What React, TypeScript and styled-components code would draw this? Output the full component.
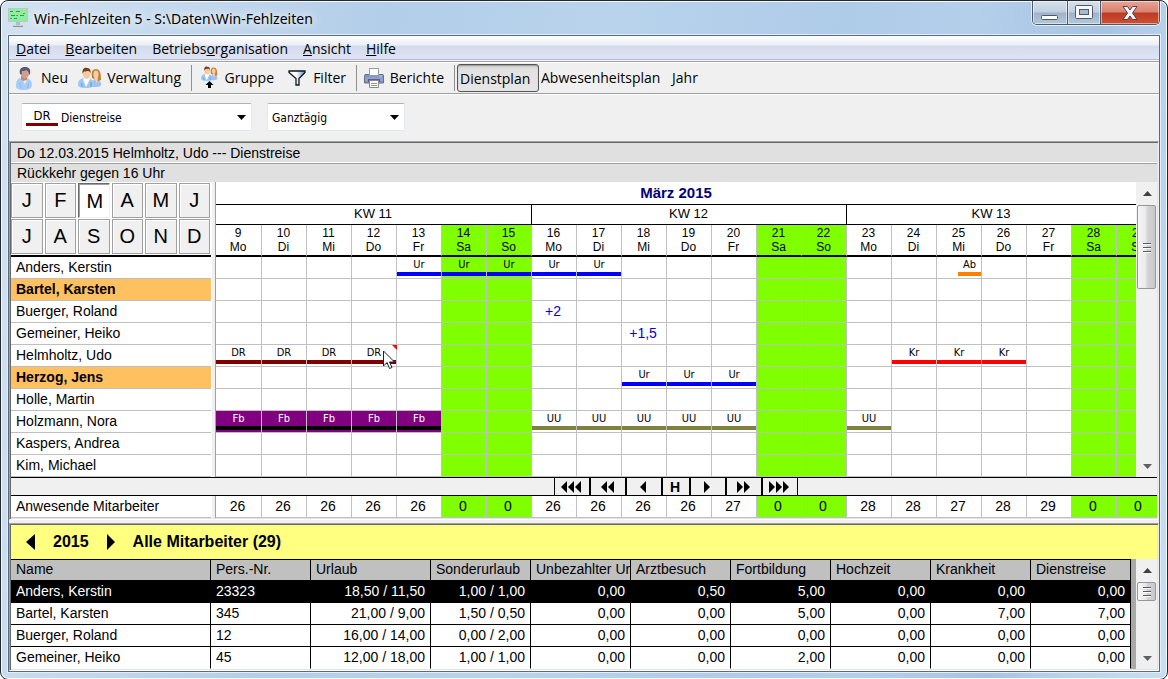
import React from 'react';
import styled, { createGlobalStyle, css } from 'styled-components';

const UI = '"Open Sans", "Noto Sans", sans-serif';
const ARIAL = '"Liberation Sans", Arial, sans-serif';
const TAHOMA = '"DejaVu Sans Condensed", "Noto Sans", sans-serif';
const LINE = '#c0c0c0';
const GREEN = '#80ff00';

const Global = createGlobalStyle`
  *, *::before, *::after { box-sizing: border-box; }
  body { margin: 0; background: #fff; }
  button { font: inherit; color: inherit; padding: 0; margin: 0; border: 0; background: none; }
  h1, h2, p, ul { margin: 0; padding: 0; font-size: inherit; font-weight: inherit; }
`;

const Window = styled.div`
  display: flex;
  flex-direction: column;
  min-height: 100vh;
  padding: 0 7px 7px;
  border: 1px solid #23272e;
  border-radius: 8px;
  box-shadow: inset 0 0 0 1px #f4f9fd;
  background: linear-gradient(100deg, #d3e2f1 0, #c6daee 12%, #b3cee9 30%, #b9d3ec 48%, #aecbe8 66%, #b4cfea 76%, #a6c4e2 86%, #b9d3ec 92%, #c9def0 100%);
  font-family: ${ARIAL};
  font-size: 14px;
  color: #000;
  overflow: hidden;
`;

const TitleBar = styled.header`
  display: flex;
  align-items: flex-start;
  height: 34px;
`;

const Title = styled.h1`
  display: flex;
  flex: 1;
  align-items: center;
  gap: 6px;
  height: 34px;
  font-family: "Noto Sans", "Open Sans", sans-serif;
  font-size: 14px;
  white-space: nowrap;
  text-shadow: 0 0 8px #fff, 0 0 12px #fff;
`;

const Captions = styled.div`
  display: flex;
  border: 1px solid #4d5a6b;
  border-top: 0;
  border-radius: 0 0 5px 5px;
  box-shadow: 0 0 0 1px #e6f0f8;
  overflow: hidden;
`;

const CaptionButton = styled.button<{ $w: number; $close?: boolean }>`
  display: flex;
  align-items: center;
  justify-content: center;
  width: ${p => p.$w}px;
  height: 23px;
  border-right: 1px solid #4d5a6b;
  box-shadow: inset 0 0 0 1px rgba(255, 255, 255, 0.5);
  background: ${p => p.$close
    ? 'linear-gradient(#e9a393, #d98272 48%, #bd3b23 52%, #cc5137)'
    : 'linear-gradient(#d5e1ed, #c0cfdf 48%, #9fb2c8 52%, #b4c8dc)'};
  &:last-child { border-right: 0; }
`;

const Client = styled.main`
  display: flex;
  flex: 1;
  flex-direction: column;
  border: 1px solid #5c6a7b;
  box-shadow: 0 0 0 1px #e2eef8;
  background: #f0f0f0;
  min-width: 0;
`;

const MenuBar = styled.nav`
  display: flex;
  align-items: center;
  gap: 15px;
  height: 25px;
  padding: 0 7px;
  border-bottom: 1px solid #f5f5f5;
  box-shadow: inset 0 -1px #b6bccc;
  background: linear-gradient(#fff, #e9eef7 9px, #d4dbed 10px, #dfe5f5);
  font-family: ${UI};
  font-size: 14px;
`;

const ToolBar = styled.div`
  display: flex;
  align-items: center;
  height: 32px;
  padding: 0 6px;
  border-top: 1px solid #a0a0a0;
  box-shadow: inset 0 1px #fff;
  font-family: ${UI};
  font-size: 14px;
`;

const Tool = styled.button<{ $w: number; $pressed?: boolean }>`
  display: flex;
  align-items: center;
  justify-content: space-between;
  width: ${p => p.$w}px;
  height: 28px;
  white-space: nowrap;
  ${p => p.$pressed && css`
    justify-content: flex-start;
    padding: 2px 0 0 2px;
    border: 1px solid #555;
    border-radius: 3px;
    background: linear-gradient(#cfcfcf, #e2e2e2 5px, #e6e6e6);
    box-shadow: inset 0 1px 1px #999;
  `}
`;

const ToolGap = styled.span<{ $w: number }>`
  width: ${p => p.$w}px;
`;

const Divider = styled.span`
  width: 1px;
  height: 26px;
  background: #909090;
`;

const Choices = styled.div`
  display: flex;
  gap: 15px;
  height: 48px;
  padding: 9px 12px;
  border-top: 1px solid #a0a0a0;
  box-shadow: inset 0 1px #fff;
`;

const Combo = styled.label<{ $w: number }>`
  display: flex;
  position: relative;
  width: ${p => p.$w}px;
  height: 28px;
  font-family: ${TAHOMA};
  font-size: 12px;
  svg { position: absolute; right: 6px; top: 12px; pointer-events: none; }
`;

const ComboBox = styled.select<{ $tagged?: boolean }>`
  appearance: none;
  width: 100%;
  padding: 2px 20px 0 ${p => (p.$tagged ? 39 : 4)}px;
  border: 1px solid #e2e8f0;
  border-top-color: #b0b4ba;
  border-radius: 2px;
  background: #fff;
  color: #000;
  font: inherit;
`;

const ComboTag = styled.span`
  position: absolute;
  left: 5px;
  top: 5px;
  width: 32px;
  height: 18px;
  border-bottom: 3px solid #800000;
  font-size: 13px;
  line-height: 15px;
  text-align: center;
`;

const Sunken = styled.section<{ $grow?: boolean }>`
  display: flex;
  flex-direction: column;
  flex: ${p => (p.$grow ? '1' : 'none')};
  border: 1px solid;
  border-color: #a0a0a0 #f0f0f0 #fff #a0a0a0;
  box-shadow: inset 1px 1px #696969, inset -1px -1px #e3e3e3;
  padding: 1px;
  & + & { margin-top: 3px; }
`;

const Info = styled.p`
  height: 20px;
  padding: 0 6px;
  border-bottom: 1px solid #fff;
  background: #e0e0e0;
  line-height: 20px;
  & + & { height: 19px; border-top: 1px solid #a0a0a0; border-bottom: 0; line-height: 18px; }
`;

const Plan = styled.div`
  display: flex;
  background: #fff;
`;

const Left = styled.div`
  flex: none;
  width: 200px;
`;

const Gutter = styled.div`
  flex: none;
  width: 5px;
  border-left: 1px solid #fff;
  border-right: 1px solid #a0a0a0;
  background: #f0f0f0;
`;

const Months = styled.div`
  display: grid;
  grid-template-columns: repeat(6, 1fr);
  grid-auto-rows: 35px;
  gap: 1px;
  height: 75px;
  padding-top: 1px;
  border-bottom: 2px solid #000;
`;

const Month = styled.button<{ $on?: boolean }>`
  margin: 0 1px 0 0;
  border: 1px solid #a0a0a0;
  box-shadow: inset 1px 1px #fff;
  background: #f0f0f0;
  font-size: 20px;
  ${p => p.$on && css`
    border-color: #696969 #f0f0f0 #f0f0f0 #696969;
    box-shadow: inset 1px 1px #a0a0a0;
    background: #fff;
    padding: 2px 0 0 2px;
  `}
`;

const Names = styled.ul`
  list-style: none;
`;

const Person = styled.li<{ $marked?: boolean }>`
  height: 22px;
  padding: 0 5px;
  border-bottom: 1px solid ${LINE};
  line-height: 21px;
  white-space: nowrap;
  background: ${p => (p.$marked ? '#ffc060' : '#fff')};
  font-weight: ${p => (p.$marked ? 'bold' : 'normal')};
`;

const Viewport = styled.div`
  flex: 1;
  min-width: 0;
  overflow: hidden;
`;

const MonthTitle = styled.h2`
  height: 23px;
  border-bottom: 1px solid #000;
  color: #000080;
  font-size: 15px;
  font-weight: bold;
  line-height: 22px;
  text-align: center;
`;

const Grid = styled.table`
  width: 100%;
  min-width: 946px;
  table-layout: fixed;
  border-spacing: 0;
  th, td { padding: 0; font-weight: normal; text-align: center; vertical-align: top; }
`;

const Week = styled.th<{ $last?: boolean }>`
  height: 20px;
  border-bottom: 1px solid #000;
  border-right: 1px solid #000;
  font-size: 13px;
  line-height: 18px;
  && { padding-right: ${p => (p.$last ? 26 : 1)}px; }
`;

const Day = styled.th<{ $free: boolean }>`
  height: 32px;
  border-right: 1px solid ${LINE};
  border-bottom: 2px solid #000;
  background: ${p => (p.$free ? GREEN : '#fff')};
  font-size: 12px;
  line-height: 14px;
  && { padding: 1px 1px 0 0; }
`;

const Cell = styled.td<{ $free: boolean }>`
  position: relative;
  height: 22px;
  border-right: 1px solid ${LINE};
  border-bottom: 1px solid ${LINE};
  background: ${p => (p.$free ? GREEN : '#fff')};
  line-height: 21px;
`;

const Credit = styled.span`
  display: block;
  height: 21px;
  padding-right: 2px;
  color: #0000e0;
  line-height: 21px;
`;

const Present = styled.span`
  display: block;
  padding-right: 2px;
`;

const Absence = styled.span<{ $bar: string; $fill?: string; $half?: boolean }>`
  display: block;
  height: 21px;
  margin-left: ${p => (p.$half ? '21px' : '0')};
  background: ${p => p.$fill || 'transparent'};
  color: ${p => (p.$fill ? '#fff' : '#000')};
  font-family: ${TAHOMA};
  font-size: 11px;
  line-height: 15px;
  &::after {
    content: '';
    display: block;
    height: 4px;
    background: ${p => p.$bar};
  }
`;

const NoteMark = styled.span`
  position: absolute;
  top: 0;
  right: -1px;
  border-top: 5px solid #f00;
  border-left: 5px solid transparent;
`;

const Pointer = styled.svg`
  position: absolute;
  left: 31px;
  top: 5px;
  z-index: 2;
`;

const Scroll = styled.div`
  display: flex;
  flex: none;
  flex-direction: column;
  width: 21px;
  padding-left: 1px;
  background: #f0f0f0;
`;

const ScrollButton = styled.button<{ $end?: boolean }>`
  display: flex;
  align-items: center;
  justify-content: center;
  height: 22px;
  margin-top: ${p => (p.$end ? 'auto' : '0')};
`;

const Thumb = styled.div<{ $h: number }>`
  display: flex;
  align-items: center;
  justify-content: center;
  height: ${p => p.$h}px;
  margin-right: 1px;
  margin-top: 1px;
  border: 1px solid #979797;
  border-radius: 2px;
  background: linear-gradient(90deg, #f5f5f5, #e9e9eb 45%, #d4d4d6 55%, #c8c8ca);
`;

const NavBar = styled.div`
  display: flex;
  justify-content: center;
  height: 19px;
  padding: 0 21px 0 205px;
  border: solid #000;
  border-width: 1px 0;
`;

const NavButton = styled.button<{ $w: number }>`
  display: flex;
  align-items: center;
  justify-content: center;
  width: ${p => p.$w}px;
  padding-right: 2px;
  border: solid #000;
  border-width: 0 1px;
  font-weight: bold;
`;

const YearBar = styled.div`
  display: flex;
  align-items: center;
  gap: 18px;
  height: 34px;
  padding: 0 15px;
  background: #ffff80;
  font-size: 16px;
  font-weight: bold;
  button { display: flex; }
`;

const Accounts = styled.div`
  display: flex;
  flex: 1;
  background: #a9a9a9;
`;

const AccountPane = styled.div`
  flex: 1;
  min-width: 0;
  margin-right: 5px;
  background: #fff;
  overflow: hidden;
`;

const AccountTable = styled.table`
  width: 100%;
  table-layout: fixed;
  border-spacing: 0;
  th, td {
    height: 22px;
    padding: 0 5px;
    border-right: 1px solid #000;
    border-bottom: 1px solid #000;
    font-weight: normal;
    line-height: 20px;
    text-align: left;
    vertical-align: top;
    white-space: nowrap;
    overflow: hidden;
  }
  th { border-top: 1px solid #000; padding-right: 0; background: #c0c0c0; line-height: 18px; }
  td:nth-child(n + 3) { text-align: right; }
  tbody tr:last-child td { border-bottom-color: #fff; }
`;

const AccountRow = styled.tr<{ $active?: boolean }>`
  background: ${p => (p.$active ? '#000' : '#fff')};
  color: ${p => (p.$active ? '#fff' : '#000')};
`;

const AppIcon = () => (
  <svg width="20" height="20" viewBox="0 0 20 20" aria-hidden="true">
    <rect x="0.5" y="0.5" width="19" height="13" fill="#86f0a4" stroke="#b9c9c4" />
    <path d="M2 3.500h3M8 3.500h4M3 7.500h4M12 7.500h4M6 10.500h3" stroke="#1f9f50" />
    <path d="M13 3.500h4M9 5.500h3M14 10.500h3M3 5.500h2" stroke="#e8d44c" />
    <path d="M2 10.500h2M8 7.500h2M15 5.500h2" stroke="#d8604e" />
    <path d="M8 14h4v3H8z" fill="#b4bcc2" />
    <path d="M5 17h10v2H5z" fill="#8a949b" />
    <path d="M5 17.500h10" stroke="#c9d0d5" />
  </svg>
);

const PersonIcon = () => (
  <svg width="18" height="24" viewBox="0 0 18 24" aria-hidden="true">
    <path d="M1 20c0-4 1-7 4-8l3 2 4-2c3 1 5 3 5 7 0 3-3 5-8 5s-8-1-8-4z" fill="#a8cdf6" />
    <path d="M4 17c1 1 2 3 2 5M14 16c-1 2-1 4-1 6" stroke="#8ab6ea" fill="none" />
    <path d="M6 10h6v4l-3 2-3-3z" fill="#c08a70" />
    <ellipse cx="10" cy="7.500" rx="4" ry="5" fill="#cfa08c" />
    <path d="M5 8C4 3 6 1 10 1c4 0 6 2 5 7l-1 1c0-3-1-4-3-5-1 1-3 1-4 1l-.5 4z" fill="#5c5670" />
    <path d="M8 15l2 3 2-4z" fill="#e8f2fd" />
  </svg>
);

const Couple = () => (
  <>
    <path d="M13 20c0-5 2-8 5-8 4 0 5 3 5 6 0 1-2 2-5 2z" fill="#9cc4f2" />
    <path d="M14 11c-1-6 0-9 4-9s5 4 5 11l-3 1-4-2z" fill="#c08438" />
    <ellipse cx="18" cy="7.500" rx="2.500" ry="4" fill="#f6cda4" />
    <path d="M16 11h4l-1 5z" fill="#f6d2ac" />
    <path d="M0 18c0-4 2-6 5-7h5c4 1 6 3 6 7 0 2-3 3-8 3s-8-1-8-3z" fill="#9cc8f4" />
    <path d="M5 12l3 8 4-8-2-1H6z" fill="#fff" />
    <path d="M3 16c1 1 1 2 1 4M13 15v5" stroke="#5f97d8" fill="none" />
    <ellipse cx="8.500" cy="7" rx="3.500" ry="5" fill="#f4c8a0" />
    <path d="M4.500 7C4 2 6 0 9 1c3 0 4 2 3.500 6C12 4 11 4 9 4 7 5 6 4 5.500 5z" fill="#7a3f17" />
  </>
);

const CoupleIcon = () => (
  <svg width="24" height="21" viewBox="0 0 24 21" aria-hidden="true"><Couple /></svg>
);

const GroupIcon = () => (
  <svg width="17" height="23" viewBox="0 0 17 23" aria-hidden="true">
    <svg width="17" height="15" viewBox="0 0 24 21" preserveAspectRatio="none"><Couple /></svg>
    <path d="M8.500 15l4 4h-8z" />
    <path d="M7 18h3v4H7z" />
  </svg>
);

const FilterIcon = () => (
  <svg width="18" height="16" viewBox="0 0 18 16" aria-hidden="true">
    <defs>
      <linearGradient id="funnel">
        <stop offset=".45" stopColor="#fff" />
        <stop offset="1" stopColor="#4f8fe0" />
      </linearGradient>
    </defs>
    <path d="M1 1h16v1.500l-6 6v6.500H8V8.500l-7-6z" fill="url(#funnel)" stroke="#101418" strokeWidth="1.300" />
  </svg>
);

const PrinterIcon = () => (
  <svg width="20" height="20" viewBox="0 0 20 20" aria-hidden="true">
    <path d="M1 6.500h18l.5 1V15h-19V7.500z" fill="#6d9fb8" stroke="#6a7088" />
    <path d="M1 9h18v4H1z" fill="#9c97d6" />
    <rect x="5.500" y=".5" width="9" height="7" fill="#fff" stroke="#9a9ca6" />
    <path d="M15 7h3v2h-3z" fill="#7fd0b4" />
    <path d="M4 11h12v3H4z" fill="#5c5f7c" />
    <path d="M5.500 12.500h9v7h-9z" fill="#fff" stroke="#8a8a8a" />
    <path d="M7 15.500h6M7 17.500h6" stroke="#999" />
  </svg>
);

const Down = () => (
  <svg width="9" height="5" viewBox="0 0 9 5" aria-hidden="true"><path d="M0 0h9L4.500 5z" /></svg>
);

const Arrows = ({ n, back, w = 6, h = 12, step = 7 }: { n: number; back?: boolean; w?: number; h?: number; step?: number }) => (
  <svg width={w + step * (n - 1)} height={h} aria-hidden="true">
    {Array.from({ length: n }, (_, i) => {
      const x = i * step;
      return <path key={i} d={back ? `M${x + w} 0v${h}L${x} ${h / 2}z` : `M${x} 0v${h}L${x + w} ${h / 2}z`} />;
    })}
  </svg>
);

const ScrollBar = ({ thumb }: { thumb: number }) => (
  <Scroll>
    <ScrollButton aria-label="Nach oben">
      <svg width="9" height="5"><path d="M0 5h9L4.500 0z" fill="#404040" /></svg>
    </ScrollButton>
    <Thumb $h={thumb}>
      <svg width="10" height="11">
        <path d="M1 1.500h8M1 5.500h8M1 9.500h8" stroke="#555b63" />
        <path d="M1 2.500h8M1 6.500h8M1 10.500h8" stroke="#fff" />
      </svg>
    </Thumb>
    <ScrollButton $end aria-label="Nach unten">
      <svg width="9" height="5"><path d="M0 0h9L4.500 5z" fill="#606060" /></svg>
    </ScrollButton>
  </Scroll>
);

const WEEKDAYS = ['Mo', 'Di', 'Mi', 'Do', 'Fr', 'Sa', 'So'];
const DAYS = Array.from({ length: 21 }, (_, i) => ({ n: i + 9, name: WEEKDAYS[i % 7], free: i % 7 > 4 }));
const PRESENT = [26, 26, 26, 26, 26, 0, 0, 26, 26, 26, 26, 27, 0, 0, 28, 28, 27, 28, 29, 0, 0];

const KINDS: Record<string, { bar: string; fill?: string; half?: boolean }> = {
  Ur: { bar: '#0000ff' },
  DR: { bar: '#800000' },
  Fb: { bar: '#000', fill: '#800080' },
  UU: { bar: '#808040' },
  Kr: { bar: '#ff0000' },
  Ab: { bar: '#ff8000', half: true },
};

type Staff = { name: string; marked?: boolean; days?: Record<number, string>; note?: number };

const fill = (kind: string, ...days: number[]) => Object.fromEntries(days.map(d => [d, kind]));

const STAFF: Staff[] = [
  { name: 'Anders, Kerstin', days: { ...fill('Ur', 13, 14, 15, 16, 17), 25: 'Ab' } },
  { name: 'Bartel, Karsten', marked: true },
  { name: 'Buerger, Roland', days: { 16: '+2' } },
  { name: 'Gemeiner, Heiko', days: { 18: '+1,5' } },
  { name: 'Helmholtz, Udo', days: { ...fill('DR', 9, 10, 11, 12), ...fill('Kr', 24, 25, 26) }, note: 12 },
  { name: 'Herzog, Jens', marked: true, days: fill('Ur', 18, 19, 20) },
  { name: 'Holle, Martin' },
  { name: 'Holzmann, Nora', days: { ...fill('Fb', 9, 10, 11, 12, 13), ...fill('UU', 16, 17, 18, 19, 20, 23) } },
  { name: 'Kaspers, Andrea' },
  { name: 'Kim, Michael' },
];

const COLUMNS = ['Name', 'Pers.-Nr.', 'Urlaub', 'Sonderurlaub', 'Unbezahlter Ur', 'Arztbesuch', 'Fortbildung', 'Hochzeit', 'Krankheit', 'Dienstreise'];
const ACCOUNTS = [
  ['Anders, Kerstin', '23323', '18,50 / 11,50', '1,00 / 1,00', '0,00', '0,50', '5,00', '0,00', '0,00', '0,00'],
  ['Bartel, Karsten', '345', '21,00 / 9,00', '1,50 / 0,50', '0,00', '0,00', '5,00', '0,00', '7,00', '7,00'],
  ['Buerger, Roland', '12', '16,00 / 14,00', '0,00 / 2,00', '0,00', '0,00', '0,00', '0,00', '0,00', '0,00'],
  ['Gemeiner, Heiko', '45', '12,00 / 18,00', '1,00 / 1,00', '0,00', '0,00', '2,00', '0,00', '0,00', '0,00'],
];

const DayColumns = () => (
  <colgroup>
    {DAYS.map((d, i) => <col key={d.n} style={{ width: i ? 45 : 46 }} />)}
  </colgroup>
);

const Entry = ({ code }: { code: string }) => {
  const kind = KINDS[code];
  if (!kind) return <Credit>{code}</Credit>;
  return <Absence $bar={kind.bar} $fill={kind.fill} $half={kind.half}>{code}</Absence>;
};

export default function App() {
  return (
    <>
      <Global />
      <Window>
        <TitleBar>
          <Title><AppIcon />Win-Fehlzeiten 5 - S:\Daten\Win-Fehlzeiten</Title>
          <Captions>
            <CaptionButton $w={35} aria-label="Minimieren">
              <svg width="18" height="20"><rect x=".5" y="12.500" width="16" height="4" rx="1" fill="#fff" stroke="#4d5a6b" /></svg>
            </CaptionButton>
            <CaptionButton $w={33} aria-label="Maximieren">
              <svg width="18" height="15">
                <rect x=".5" y=".5" width="17" height="13" rx="1" fill="#f7f7f7" stroke="#4d5a6b" />
                <rect x="4.500" y="4.500" width="9" height="5" fill="#a9bccf" stroke="#4d5a6b" />
              </svg>
            </CaptionButton>
            <CaptionButton $w={58} $close aria-label="Schließen">
              <svg width="16" height="14">
                <path d="M1 .5h4.500L8 4l2.500-3.500H15L10.500 7l4.500 6.500h-4.500L8 10l-2.500 3.500H1L5.500 7z" fill="#f4f4f4" stroke="#55404a" />
              </svg>
            </CaptionButton>
          </Captions>
        </TitleBar>
        <Client>
          <MenuBar>
            <button><u>D</u>atei</button>
            <button><u>B</u>earbeiten</button>
            <button>Betriebs<u>o</u>rganisation</button>
            <button><u>A</u>nsicht</button>
            <button><u>H</u>ilfe</button>
          </MenuBar>
          <ToolBar>
            <Tool $w={53}><PersonIcon />Neu</Tool>
            <ToolGap $w={10} />
            <Tool $w={103}><CoupleIcon />Verwaltung</Tool>
            <ToolGap $w={10} />
            <Divider />
            <ToolGap $w={9} />
            <Tool $w={73}><GroupIcon />Gruppe</Tool>
            <ToolGap $w={14} />
            <Tool $w={58}><FilterIcon />Filter</Tool>
            <ToolGap $w={10} />
            <Divider />
            <ToolGap $w={7} />
            <Tool $w={80}><PrinterIcon />Berichte</Tool>
            <ToolGap $w={10} />
            <Divider />
            <ToolGap $w={2} />
            <Tool $w={82} $pressed aria-pressed="true">Dienstplan</Tool>
            <ToolGap $w={2} />
            <Tool $w={120}>Abwesenheitsplan</Tool>
            <ToolGap $w={11} />
            <Tool $w={27}>Jahr</Tool>
          </ToolBar>
          <Choices>
            <Combo $w={231}>
              <ComboBox $tagged aria-label="Abwesenheitsart" defaultValue="Dienstreise"><option>Dienstreise</option></ComboBox>
              <ComboTag>DR</ComboTag>
              <Down />
            </Combo>
            <Combo $w={138}>
              <ComboBox aria-label="Tagesanteil" defaultValue="Ganztägig"><option>Ganztägig</option></ComboBox>
              <Down />
            </Combo>
          </Choices>
          <Sunken>
            <Info>Do 12.03.2015 Helmholtz, Udo --- Dienstreise</Info>
            <Info>Rückkehr gegen 16 Uhr</Info>
            <Plan>
              <Left>
                <Months>
                  {'JFMAMJJASOND'.split('').map((m, i) => <Month key={i} $on={i === 2}>{m}</Month>)}
                </Months>
                <Names>
                  {STAFF.map(s => <Person key={s.name} $marked={s.marked}>{s.name}</Person>)}
                </Names>
              </Left>
              <Gutter />
              <Viewport>
                <MonthTitle>März 2015</MonthTitle>
                <Grid>
                  <DayColumns />
                  <thead>
                    <tr>
                      <Week colSpan={7}>KW 11</Week>
                      <Week colSpan={7}>KW 12</Week>
                      <Week colSpan={7} $last>KW 13</Week>
                    </tr>
                    <tr>
                      {DAYS.map(d => <Day key={d.n} $free={d.free}>{d.n}<br />{d.name}</Day>)}
                    </tr>
                  </thead>
                  <tbody>
                    {STAFF.map(s => (
                      <tr key={s.name}>
                        {DAYS.map(d => (
                          <Cell key={d.n} $free={d.free}>
                            {s.days?.[d.n] && <Entry code={s.days[d.n]} />}
                            {s.note === d.n && (
                              <>
                                <NoteMark />
                                <Pointer width="13" height="20" viewBox="0 0 13 20">
                                  <path d="M.5 1v15l3.500-3.500 2.500 6 2.500-1-2.500-5.500h5z" fill="#fff" stroke="#1b2233" />
                                </Pointer>
                              </>
                            )}
                          </Cell>
                        ))}
                      </tr>
                    ))}
                  </tbody>
                </Grid>
              </Viewport>
              <ScrollBar thumb={84} />
            </Plan>
            <NavBar>
              <NavButton $w={36} aria-label="Weit zurück"><Arrows n={3} back /></NavButton>
              <NavButton $w={36} aria-label="Monat zurück"><Arrows n={2} back /></NavButton>
              <NavButton $w={36} aria-label="Woche zurück"><Arrows n={1} back /></NavButton>
              <NavButton $w={28}>H</NavButton>
              <NavButton $w={36} aria-label="Woche vor"><Arrows n={1} /></NavButton>
              <NavButton $w={36} aria-label="Monat vor"><Arrows n={2} /></NavButton>
              <NavButton $w={36} aria-label="Weit vor"><Arrows n={3} /></NavButton>
            </NavBar>
            <Plan>
              <Left><Person as="div">Anwesende Mitarbeiter</Person></Left>
              <Gutter />
              <Viewport>
                <Grid>
                  <DayColumns />
                  <tbody>
                    <tr>{DAYS.map((d, i) => <Cell key={d.n} $free={d.free}><Present>{PRESENT[i]}</Present></Cell>)}</tr>
                  </tbody>
                </Grid>
              </Viewport>
            </Plan>
          </Sunken>
          <Sunken $grow>
            <YearBar>
              <button aria-label="Voriges Jahr"><Arrows n={1} back w={9} h={16} /></button>
              <span>2015</span>
              <button aria-label="Nächstes Jahr"><Arrows n={1} w={8} h={16} /></button>
              <h2>Alle Mitarbeiter (29)</h2>
            </YearBar>
            <Accounts>
              <AccountPane>
                <AccountTable>
                  <colgroup>
                    {COLUMNS.map((c, i) => <col key={c} style={{ width: i === 0 ? 'auto' : i === 2 ? 120 : 100 }} />)}
                  </colgroup>
                  <thead>
                    <tr>{COLUMNS.map(c => <th key={c}>{c}</th>)}</tr>
                  </thead>
                  <tbody>
                    {ACCOUNTS.map((row, r) => (
                      <AccountRow key={row[0]} $active={r === 0}>
                        {row.map((v, i) => <td key={i}>{v}</td>)}
                      </AccountRow>
                    ))}
                  </tbody>
                </AccountTable>
              </AccountPane>
              <ScrollBar thumb={19} />
            </Accounts>
          </Sunken>
        </Client>
      </Window>
    </>
  );
}
